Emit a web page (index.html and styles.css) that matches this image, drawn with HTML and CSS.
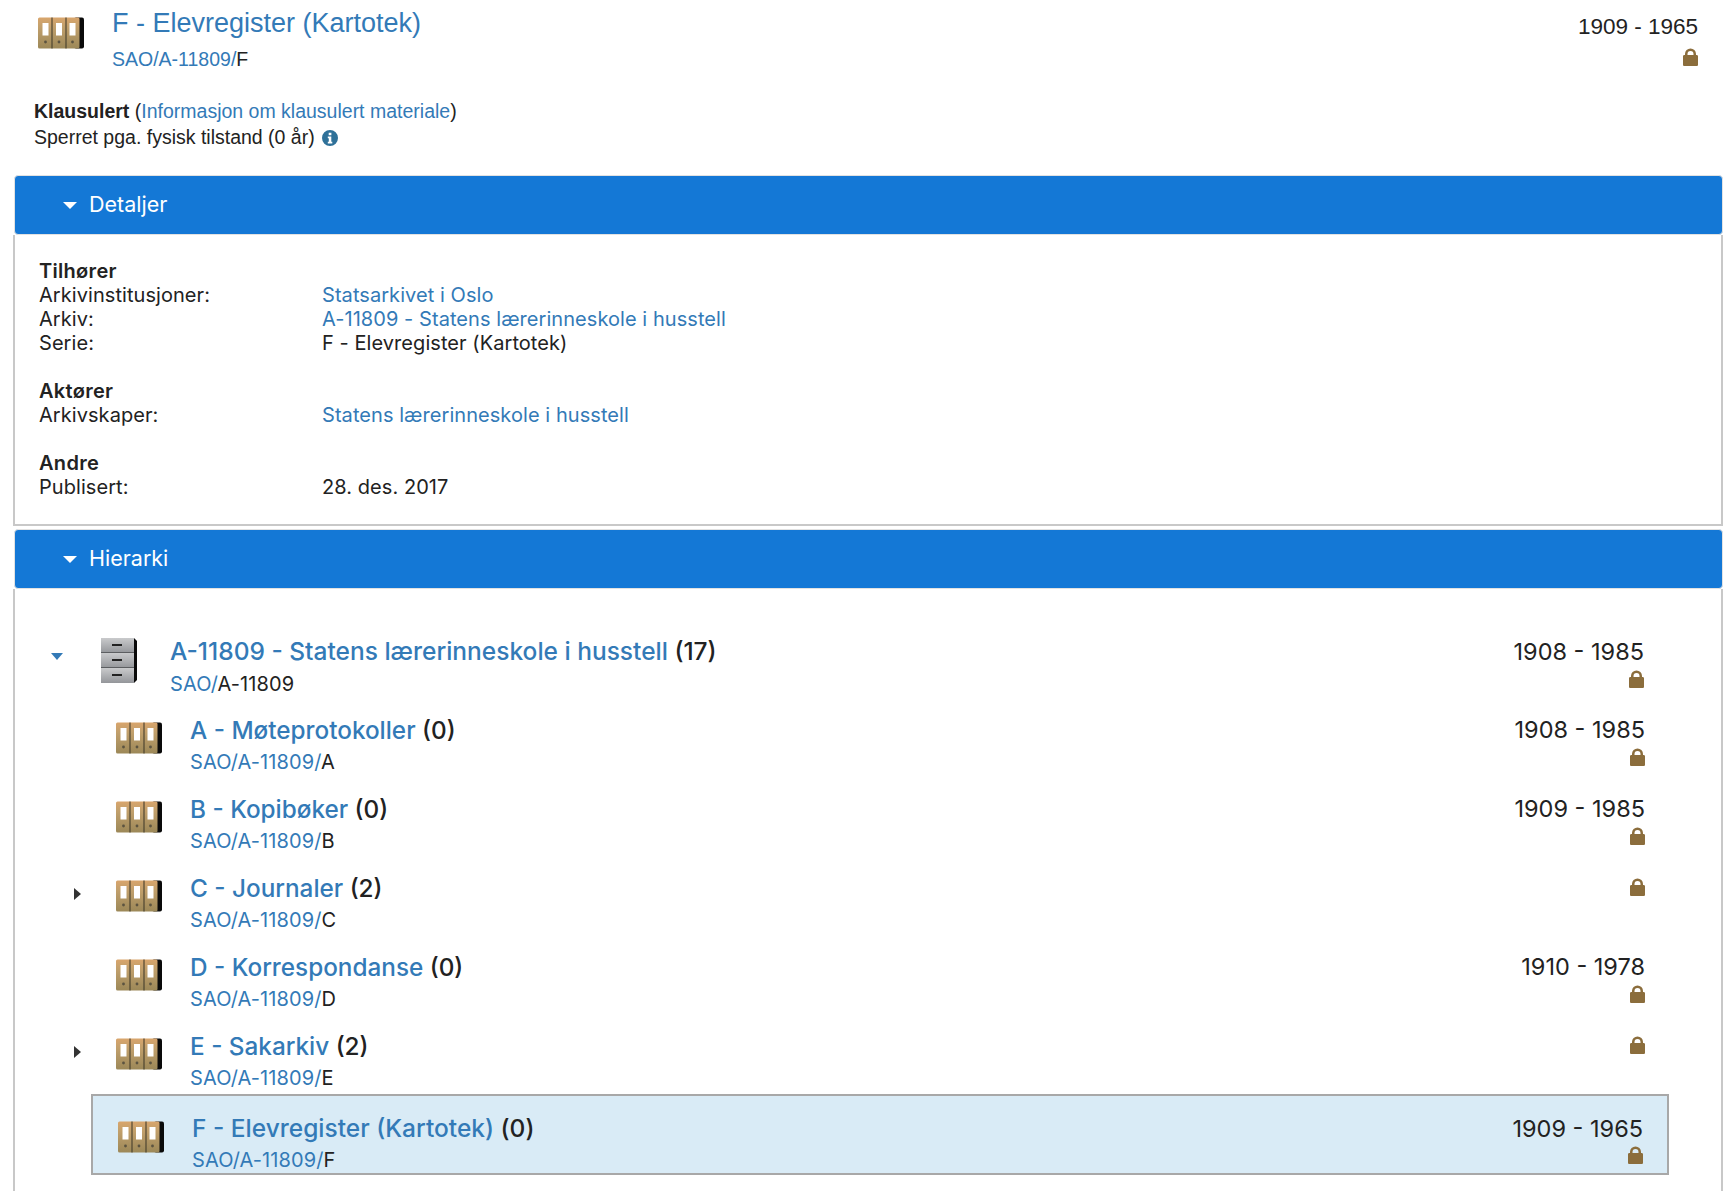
FILE: index.html
```html
<!DOCTYPE html>
<html lang="no">
<head>
<meta charset="utf-8">
<title>F - Elevregister (Kartotek)</title>
<link rel="stylesheet" href="styles.css">
</head>
<body>
<svg class="defs" width="0" height="0" aria-hidden="true">
  <defs>
    <linearGradient id="tan" x1="0" y1="0" x2="0" y2="1">
      <stop offset="0" stop-color="#d9a56c"/>
      <stop offset="0.3" stop-color="#c2a06c"/>
      <stop offset="1" stop-color="#9c8858"/>
    </linearGradient>
    <linearGradient id="steel" x1="0" y1="0" x2="0" y2="1">
      <stop offset="0" stop-color="#c9cacc"/>
      <stop offset="1" stop-color="#94969a"/>
    </linearGradient>
    <symbol id="binders" viewBox="0 0 46 32">
      <rect x="36" y="0.500" width="10" height="31" rx="2" fill="#0a0a0a"/>
      <rect x="0" y="0.500" width="41.500" height="31" rx="1.500" fill="url(#tan)"/>
      <path d="M14 0.500v31M28 0.500v31" stroke="#463e2c" stroke-width="1.100"/>
      <rect x="4.500" y="6" width="6" height="12.500" fill="#fff"/>
      <rect x="18" y="6" width="6" height="12.500" fill="#fff"/>
      <rect x="31.500" y="6" width="6" height="12.500" fill="#fff"/>
      <circle cx="7.500" cy="25" r="1.400" fill="#5b5340"/>
      <circle cx="21" cy="25" r="1.400" fill="#5b5340"/>
      <circle cx="34.500" cy="25" r="1.400" fill="#5b5340"/>
    </symbol>
    <symbol id="cabinet" viewBox="0 0 36 45">
      <path d="M28 0h5l3 3v39l-3 3h-5z" fill="#0a0a0a"/>
      <rect x="0" y="0" width="33" height="15" fill="url(#steel)"/>
      <rect x="0" y="15" width="33" height="15" fill="url(#steel)"/>
      <rect x="0" y="30" width="33" height="15" fill="url(#steel)"/>
      <path d="M0 14.500h33M0 29.500h33" stroke="#5c5e61" stroke-width="1"/>
      <rect x="11" y="6" width="10" height="2" fill="#222"/>
      <rect x="11" y="21" width="10" height="2" fill="#222"/>
      <rect x="11" y="36" width="10" height="2" fill="#222"/>
    </symbol>
    <symbol id="lock" viewBox="0 0 15 18">
      <path fill-rule="evenodd" d="M2 7V6a5.500 5.500 0 0 1 11 0v1h.7c.7 0 1.300.6 1.300 1.300v8.400c0 .7-.6 1.300-1.300 1.300H1.300C.6 18 0 17.400 0 16.700V8.300C0 7.600.6 7 1.300 7zM4.500 7h6V6a3 3 0 0 0-6 0z" fill="#8b6d3c"/>
    </symbol>
  </defs>
</svg>

<header class="record">
  <svg class="icon-binders"><use href="#binders"/></svg>
  <div class="record-main">
    <a class="record-title" href="#">F - Elevregister (Kartotek)</a>
    <div class="record-ref"><a href="#">SAO/A-11809/</a>F</div>
  </div>
  <div class="record-meta">
    <div class="record-date">1909 - 1965</div>
    <svg class="lock"><use href="#lock"/></svg>
  </div>
</header>

<section class="notice">
  <div><b>Klausulert</b> (<a href="#">Informasjon om klausulert materiale</a>)</div>
  <div class="notice-line">Sperret pga. fysisk tilstand (0 år)
    <svg class="info" viewBox="0 0 16 16"><path fill-rule="evenodd" d="M8 0a8 8 0 1 1 0 16A8 8 0 0 1 8 0zM6.700 2.800v2.500h2.700V2.800zM5.800 6.600v1.700h1v3.400h-1v1.700h4.500v-1.700h-1V6.600z" fill="#2f7199"/></svg>
  </div>
</section>

<section class="panel">
  <h2 class="panel-head"><span class="caret-down"></span>Detaljer</h2>
  <div class="panel-body details">
    <div class="group">
      <div class="group-title">Tilhører</div>
      <div class="field"><span>Arkivinstitusjoner:</span><a href="#">Statsarkivet i Oslo</a></div>
      <div class="field"><span>Arkiv:</span><a href="#">A-11809 - Statens lærerinneskole i husstell</a></div>
      <div class="field"><span>Serie:</span><span>F - Elevregister (Kartotek)</span></div>
    </div>
    <div class="group">
      <div class="group-title">Aktører</div>
      <div class="field"><span>Arkivskaper:</span><a href="#">Statens lærerinneskole i husstell</a></div>
    </div>
    <div class="group">
      <div class="group-title">Andre</div>
      <div class="field"><span>Publisert:</span><span>28. des. 2017</span></div>
    </div>
  </div>
</section>

<section class="panel">
  <h2 class="panel-head"><span class="caret-down"></span>Hierarki</h2>
  <div class="panel-body tree">
    <div class="node root">
      <span class="toggle"><span class="caret-blue"></span></span>
      <svg class="icon-cabinet"><use href="#cabinet"/></svg>
      <div class="node-main">
        <div class="node-title"><a href="#">A-11809 - Statens lærerinneskole i husstell</a> (17)</div>
        <div class="node-ref"><a href="#">SAO/</a>A-11809</div>
      </div>
      <div class="node-meta"><div class="node-date">1908 - 1985</div><svg class="lock"><use href="#lock"/></svg></div>
    </div>

    <div class="node child">
      <span class="toggle"></span>
      <svg class="icon-binders"><use href="#binders"/></svg>
      <div class="node-main">
        <div class="node-title"><a href="#">A - Møteprotokoller</a> (0)</div>
        <div class="node-ref"><a href="#">SAO/A-11809/</a>A</div>
      </div>
      <div class="node-meta"><div class="node-date">1908 - 1985</div><svg class="lock"><use href="#lock"/></svg></div>
    </div>

    <div class="node child">
      <span class="toggle"></span>
      <svg class="icon-binders"><use href="#binders"/></svg>
      <div class="node-main">
        <div class="node-title"><a href="#">B - Kopibøker</a> (0)</div>
        <div class="node-ref"><a href="#">SAO/A-11809/</a>B</div>
      </div>
      <div class="node-meta"><div class="node-date">1909 - 1985</div><svg class="lock"><use href="#lock"/></svg></div>
    </div>

    <div class="node child">
      <span class="toggle"><span class="caret-right"></span></span>
      <svg class="icon-binders"><use href="#binders"/></svg>
      <div class="node-main">
        <div class="node-title"><a href="#">C - Journaler</a> (2)</div>
        <div class="node-ref"><a href="#">SAO/A-11809/</a>C</div>
      </div>
      <div class="node-meta"><svg class="lock"><use href="#lock"/></svg></div>
    </div>

    <div class="node child">
      <span class="toggle"></span>
      <svg class="icon-binders"><use href="#binders"/></svg>
      <div class="node-main">
        <div class="node-title"><a href="#">D - Korrespondanse</a> (0)</div>
        <div class="node-ref"><a href="#">SAO/A-11809/</a>D</div>
      </div>
      <div class="node-meta"><div class="node-date">1910 - 1978</div><svg class="lock"><use href="#lock"/></svg></div>
    </div>

    <div class="node child">
      <span class="toggle"><span class="caret-right"></span></span>
      <svg class="icon-binders"><use href="#binders"/></svg>
      <div class="node-main">
        <div class="node-title"><a href="#">E - Sakarkiv</a> (2)</div>
        <div class="node-ref"><a href="#">SAO/A-11809/</a>E</div>
      </div>
      <div class="node-meta"><svg class="lock"><use href="#lock"/></svg></div>
    </div>

    <div class="node selected">
      <svg class="icon-binders"><use href="#binders"/></svg>
      <div class="node-main">
        <div class="node-title"><a href="#">F - Elevregister (Kartotek)</a> (0)</div>
        <div class="node-ref"><a href="#">SAO/A-11809/</a>F</div>
      </div>
      <div class="node-meta"><div class="node-date">1909 - 1965</div><svg class="lock"><use href="#lock"/></svg></div>
    </div>
  </div>
</section>
</body>
</html>
```

FILE: styles.css
```css
* { box-sizing: border-box; }
html, body { margin: 0; height: 1191px; overflow: hidden; }
body {
  background: #fff;
  color: #222;
  font: 19.500px/26px "Liberation Sans", Arial, sans-serif;
}
a { color: #337ab7; text-decoration: none; }
.defs { display: block; height: 0; }

.record { display: flex; padding: 7px 36px 0 38px; height: 98px; }
.record .icon-binders { margin-top: 10px; }
.icon-binders { width: 46px; height: 32px; flex: none; }
.record-main { flex: 1; margin-left: 28px; }
.record-title { display: block; font-size: 27px; line-height: 32px; }
.record-ref { margin-top: 7px; line-height: 26px; }
.record-meta { display: flex; flex-direction: column; align-items: flex-end; padding-top: 7px; }
.record-date { line-height: 26px; font-size: 22.500px; }
.lock { width: 15px; height: 18px; display: block; }
.record .lock { margin-top: 8px; }

.notice { height: 77px; padding: 0 0 0 34px; }
.notice > div { line-height: 26px; }
.info { width: 16px; height: 16px; margin-left: 2px; vertical-align: -1.500px; }

.panel { margin: 0 11px 0 13px; }
.panel-head {
  margin: 0 0 0 1px;
  height: 60px;
  display: flex;
  align-items: center;
  padding-left: 48px;
  background: #1478d6;
  border: 1px solid #e2e2e2;
  border-radius: 4px;
  color: #fff;
  font: 400 21.500px/1 Inter, sans-serif;
}
.caret-down {
  width: 0; height: 0; margin-right: 12px;
  border-style: solid; border-width: 7px 7px 0; border-color: #fff transparent transparent;
}
.panel-body {
  border: 2px solid #c8c8c8;
  border-top: 0;
  font-family: Inter, sans-serif;
}
.details { height: 291px; padding: 24px 24px 0 24px; font-size: 20px; line-height: 24px; margin-bottom: 3px; }
.group { margin-bottom: 24px; }
.group-title { font-weight: 600; letter-spacing: 0.300px; }
.field { display: grid; grid-template-columns: 283px 1fr; letter-spacing: 0.060px; }

.tree { height: 620px; padding: 47px 0 0; border-bottom: 0; }
.node { display: flex; }
.node-main { flex: 1; }
.node-title { font-size: 24.300px; line-height: 32px; font-weight: 500; }
.node-ref { font-size: 20px; line-height: 26px; margin-top: 3px; letter-spacing: 0.100px; }
.node-meta { display: flex; flex-direction: column; align-items: flex-end; padding-top: 2px; }
.node-date { font-size: 23.500px; line-height: 28px; }
.node-meta .lock { margin-top: 4px; }

.root { height: 78px; padding: 0 77px 0 36px; }
.root .toggle { width: 50px; }
.root .node-title { font-size: 24.500px; margin-top: -1px; }
.root .node-ref { margin-top: 4px; }
.icon-cabinet { width: 36px; height: 45px; margin: 2px 33px 0 0; flex: none; }
.child { padding: 0 76px 0 51px; height: 79px; }
.child .toggle { width: 50px; padding-top: 16px; }
.child .icon-binders { margin: 8px 28px 0 0; }
.toggle { display: block; flex: none; padding-top: 18px; }
.caret-blue {
  display: block; width: 0; height: 0; margin-top: -1px;
  border-style: solid; border-width: 7px 6.500px 0; border-color: #337ab7 transparent transparent;
}
.caret-right {
  display: block; width: 0; height: 0; margin: 0 0 0 8px;
  border-style: solid; border-width: 6.500px 0 6.500px 7px; border-color: transparent transparent transparent #333;
}
.selected {
  margin: -15px 0 0 76px;
  width: 1578px;
  height: 81px;
  padding: 16px 24px 0 25px;
  background: #d9ebf6;
  border: 2px solid #a8a8a8;
}
.selected .node-title { font-size: 24.500px; }
.selected .icon-binders { margin: 9px 28px 0 0; }
.selected .node-meta { padding-top: 3px; }
.selected .lock { margin-top: 3px; }
```
